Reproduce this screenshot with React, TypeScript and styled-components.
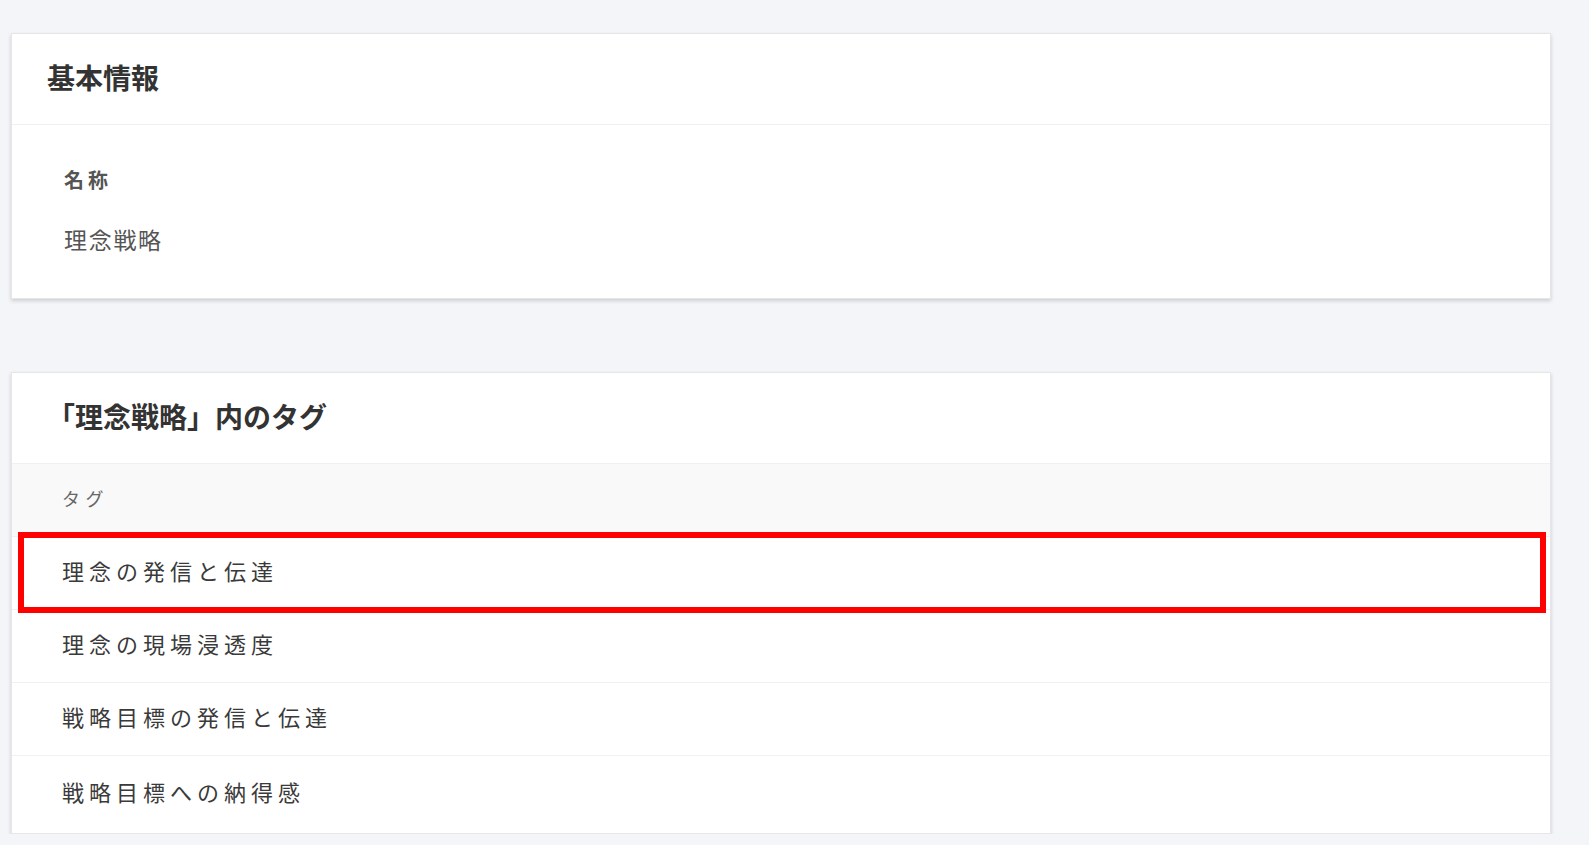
import React from 'react';
import styled, { createGlobalStyle } from 'styled-components';

const GlobalStyle = createGlobalStyle`
  body {
    margin: 0;
    background: #f4f5f9;
    font-family: "Noto Sans CJK JP", "Noto Sans", sans-serif;
  }
`;

const tags = [
  '理念の発信と伝達',
  '理念の現場浸透度',
  '戦略目標の発信と伝達',
  '戦略目標への納得感',
];

function App() {
  return (
    <>
      <GlobalStyle />
      <Page>
        <Card>
          <CardHeader>基本情報</CardHeader>
          <CardBody>
            <FieldLabel>名称</FieldLabel>
            <FieldValue>理念戦略</FieldValue>
          </CardBody>
        </Card>

        <Card>
          <CardHeader>「理念戦略」内のタグ</CardHeader>
          <Table>
            <HeadRow>タグ</HeadRow>
            {tags.map((t, i) => (
              <Row key={t}>
                {t}
                {i === 0 && <Highlight />}
              </Row>
            ))}
          </Table>
        </Card>
      </Page>
    </>
  );
}
export default App;

const Page = styled.div`
  display: flex;
  flex-direction: column;
  gap: 73px;
  width: 1540px;
  padding: 33px 0 0 11px;
`;

const Card = styled.section`
  background: #fff;
  border: 1px solid #e6e6e8;
  box-shadow: 0 2px 4px rgba(0, 0, 0, 0.16);
  box-sizing: border-box;
`;

const CardHeader = styled.h2`
  margin: 0;
  height: 86px;
  display: flex;
  align-items: center;
  padding: 0 0 4px 35px;
  border-bottom: 1px solid #f0f0f0;
  font-size: 28px;
  font-weight: 700;
  color: #333;
`;

const CardBody = styled.div`
  display: flex;
  flex-direction: column;
  gap: 29px;
  padding: 41px 52px 43px;
`;

const FieldLabel = styled.div`
  font-size: 20px;
  line-height: 28px;
  font-weight: 700;
  letter-spacing: 4px;
  color: #555;
`;

const FieldValue = styled.div`
  font-size: 23px;
  line-height: 32px;
  letter-spacing: 1.7px;
  color: #555;
`;

const Table = styled.div`
  display: flex;
  flex-direction: column;
`;

const HeadRow = styled.div`
  height: 68px;
  padding: 0 0 4px 50px;
  display: flex;
  align-items: center;
  background: #f9f9f9;
  border-bottom: 1px solid #f0f0f0;
  font-size: 18px;
  letter-spacing: 5.5px;
  color: #666;
`;

const Row = styled.div`
  position: relative;
  height: 65px;
  padding: 0 0 7px 50px;
  display: flex;
  align-items: center;
  border-bottom: 1px solid #f1f1f1;
  font-size: 22px;
  letter-spacing: 5px;
  color: #3a3a3a;

  &:last-child {
    border-bottom: none;
    height: 70px;
  }
`;

const Highlight = styled.span`
  position: absolute;
  top: -5px;
  left: 6px;
  right: 4px;
  bottom: -4px;
  border: 6px solid #ff0000;
  pointer-events: none;
`;
